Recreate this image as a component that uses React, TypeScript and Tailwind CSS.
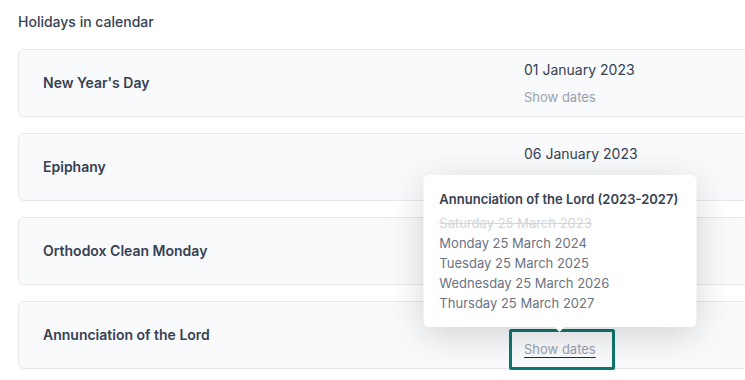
import React from "react";

type Holiday = { name: string; date: string };

const holidays: Holiday[] = [
  { name: "New Year's Day", date: "01 January 2023" },
  { name: "Epiphany", date: "06 January 2023" },
  { name: "Orthodox Clean Monday", date: "27 February 2023" },
  { name: "Annunciation of the Lord", date: "25 March 2023" },
];

function Popover() {
  return (
    <div className="absolute left-1/2 bottom-[calc(100%+9px)] z-20 w-[273px] -translate-x-1/2 rounded-md bg-white pl-4 pr-3 pt-[14px] pb-[14px] shadow-[0_8px_36px_rgba(0,0,0,0.16)]">
      <div className="mb-1 whitespace-nowrap text-[13px] font-semibold leading-5 text-gray-700">
        Annunciation of the Lord (2023-2027)
      </div>
      <div className="text-[13px] leading-5 text-gray-300 line-through">Saturday 25 March 2023</div>
      <div className="text-[13px] leading-5 text-gray-500">Monday 25 March 2024</div>
      <div className="text-[13px] leading-5 text-gray-500">Tuesday 25 March 2025</div>
      <div className="text-[13px] leading-5 text-gray-500">Wednesday 25 March 2026</div>
      <div className="text-[13px] leading-5 text-gray-500">Thursday 25 March 2027</div>
      <div className="absolute left-1/2 top-full h-0 w-0 -translate-x-1/2 border-x-[5px] border-t-[5px] border-x-transparent border-t-white" />
    </div>
  );
}

export default function App() {
  return (
    <div className="relative h-[380px] w-[745px] overflow-hidden bg-white font-['Inter',sans-serif]">
      <div className="px-[18px] pt-3">
        <h2 className="mb-[17px] text-sm font-medium leading-5 text-gray-700">Holidays in calendar</h2>
        <div className="flex w-[780px] flex-col gap-4">
          {holidays.map((h, i) => {
            const active = i === holidays.length - 1;
            return (
              <div
                key={h.name}
                className="flex h-[68px] items-center rounded-md border border-gray-200 bg-gray-50 pl-6"
              >
                <div className="w-[481px] text-sm font-semibold leading-5 text-gray-700">{h.name}</div>
                <div className="mt-[2px] flex flex-col">
                  <div className="text-sm leading-5 text-gray-700">{h.date}</div>
                  <div className="relative mt-1 self-start">
                    {active && <Popover />}
                    {active && (
                      <div className="pointer-events-none absolute -left-[15px] -right-[19px] -top-[7px] -bottom-[10px] rounded-[2px] border-[3px] border-[#0f766e]" />
                    )}
                    <span
                      className={
                        active
                          ? "text-[13px] leading-5 text-gray-400 underline decoration-gray-800 underline-offset-[3px]"
                          : "text-[13px] leading-5 text-gray-400"
                      }
                    >
                      Show dates
                    </span>
                  </div>
                </div>
              </div>
            );
          })}
        </div>
      </div>
    </div>
  );
}
